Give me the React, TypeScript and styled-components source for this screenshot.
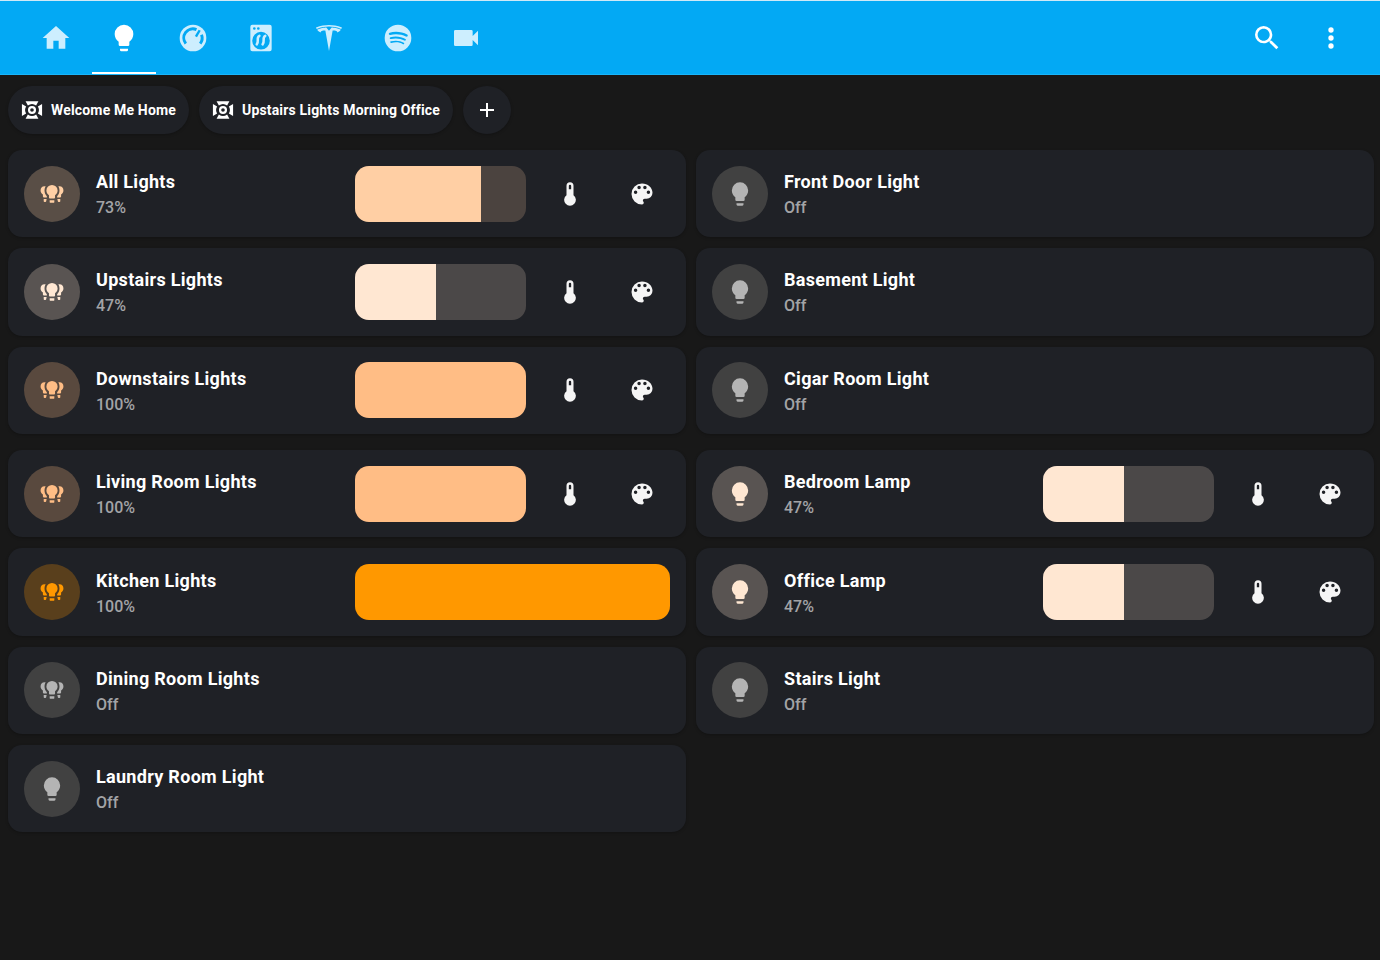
import React from "react";
import styled, { createGlobalStyle } from "styled-components";
import { SiTesla } from "react-icons/si";

const Global = createGlobalStyle`
  html, body { margin: 0; padding: 0; background: #181818; }
  body { font-family: Roboto, "Liberation Sans", sans-serif; width: 1380px; height: 960px; overflow: hidden; }
`;

const P = {
  home: "M10,20V14H14V20H19V12H22L12,3L2,12H5V20H10Z",
  bulb: "M12,2A7,7 0 0,0 5,9C5,11.38 6.19,13.47 8,14.74V17A1,1 0 0,0 9,18H15A1,1 0 0,0 16,17V14.74C17.81,13.47 19,11.38 19,9A7,7 0 0,0 12,2M9,21A1,1 0 0,0 10,22H14A1,1 0 0,0 15,21V20H9V21Z",
  spotify: "M17.9,10.9C14.7,9 9.35,8.8 6.3,9.75C5.8,9.9 5.3,9.6 5.15,9.15C5,8.65 5.3,8.15 5.75,8C9.3,6.95 15.15,7.15 18.85,9.35C19.3,9.6 19.45,10.2 19.2,10.65C18.95,11 18.35,11.15 17.9,10.9M17.8,13.7C17.55,14.05 17.1,14.2 16.75,13.95C14.05,12.3 9.95,11.8 6.8,12.8C6.4,12.9 5.95,12.7 5.85,12.3C5.75,11.9 5.95,11.45 6.35,11.35C10,10.25 14.5,10.8 17.6,12.7C17.9,12.85 18.05,13.35 17.8,13.7M16.6,16.45C16.4,16.75 16.05,16.85 15.75,16.65C13.4,15.2 10.45,14.9 6.95,15.7C6.6,15.8 6.3,15.55 6.2,15.25C6.1,14.9 6.35,14.6 6.65,14.5C10.45,13.65 13.75,14 16.35,15.6C16.7,15.75 16.75,16.15 16.6,16.45M12,2A10,10 0 0,0 2,12A10,10 0 0,0 12,22A10,10 0 0,0 22,12A10,10 0 0,0 12,2Z",
  video: "M17,10.5V7A1,1 0 0,0 16,6H4A1,1 0 0,0 3,7V17A1,1 0 0,0 4,18H16A1,1 0 0,0 17,17V13.5L21,17.5V6.5L17,10.5Z",
  search: "M9.5,3A6.5,6.5 0 0,1 16,9.5C16,11.11 15.41,12.59 14.44,13.73L14.71,14H15.5L20.5,19L19,20.5L14,15.5V14.71L13.73,14.44C12.59,15.41 11.11,16 9.5,16A6.5,6.5 0 0,1 3,9.5A6.5,6.5 0 0,1 9.5,3M9.5,5C7,5 5,7 5,9.5C5,12 7,14 9.5,14C12,14 14,12 14,9.5C14,7 12,5 9.5,5Z",
  dots: "M12,16A2,2 0 0,1 14,18A2,2 0 0,1 12,20A2,2 0 0,1 10,18A2,2 0 0,1 12,16M12,10A2,2 0 0,1 14,12A2,2 0 0,1 12,14A2,2 0 0,1 10,12A2,2 0 0,1 12,10M12,4A2,2 0 0,1 14,6A2,2 0 0,1 12,8A2,2 0 0,1 10,6A2,2 0 0,1 12,4Z",
  plus: "M19,13H13V19H11V13H5V11H11V5H13V11H19V13Z",
  palette: "M17.5,12A1.5,1.5 0 0,1 16,10.5A1.5,1.5 0 0,1 17.5,9A1.5,1.5 0 0,1 19,10.5A1.5,1.5 0 0,1 17.5,12M14.5,8A1.5,1.5 0 0,1 13,6.5A1.5,1.5 0 0,1 14.5,5A1.5,1.5 0 0,1 16,6.5A1.5,1.5 0 0,1 14.5,8M9.5,8A1.5,1.5 0 0,1 8,6.5A1.5,1.5 0 0,1 9.5,5A1.5,1.5 0 0,1 11,6.5A1.5,1.5 0 0,1 9.5,8M6.5,12A1.5,1.5 0 0,1 5,10.5A1.5,1.5 0 0,1 6.5,9A1.5,1.5 0 0,1 8,10.5A1.5,1.5 0 0,1 6.5,12M12,3A9,9 0 0,0 3,12A9,9 0 0,0 12,21A1.5,1.5 0 0,0 13.5,19.5C13.5,19.11 13.35,18.76 13.11,18.5C12.88,18.23 12.73,17.88 12.73,17.5A1.5,1.5 0 0,1 14.23,16H16A5,5 0 0,0 21,11C21,6.58 16.97,3 12,3Z",
  thermo: "M15 13V5A3 3 0 0 0 9 5V13A5 5 0 1 0 15 13M12 4A1 1 0 0 1 13 5V8H11V5A1 1 0 0 1 12 4Z",
  group: "M12,4.2A4.8,4.8 0 0,0 7.2,9C7.2,10.7 8.1,12.2 9.4,13V15A.8.8 0 0,0 10.2,15.8H13.8A.8.8 0 0,0 14.6,15V13C15.9,12.2 16.8,10.7 16.8,9A4.8,4.8 0 0,0 12,4.2M10,17.3H14V18.8A.8.8 0 0,1 13.2,19.6H10.8A.8.8 0 0,1 10,18.8V17.3ZM5.6,5.4A3.6,3.6 0 0,0 2.2,9C2.2,10.5 3,11.7 4.2,12.4V14.2A.7.7 0 0,0 4.9,14.9H7.6V13.9C6.4,12.7 5.6,11 5.6,9C5.6,7.6 5.9,6.4 6.6,5.5C6.3,5.4 5.9,5.4 5.6,5.4M18.4,5.4C18.1,5.4 17.7,5.4 17.4,5.5C18.1,6.4 18.4,7.6 18.4,9C18.4,11 17.6,12.7 16.4,13.9V14.9H19.1A.7.7 0 0,0 19.8,14.2V12.4C21,11.7 21.8,10.5 21.8,9A3.6,3.6 0 0,0 18.4,5.4M4.9,16.2H7.4L7,18.3A.7.7 0 0,1 6.3,18.9H5.6A.7.7 0 0,1 4.9,18.2V16.2M16.6,16.2H19.1V18.2A.7.7 0 0,1 18.4,18.9H17.7A.7.7 0 0,1 17,18.3L16.6,16.2Z",
  scene: "M5,2.5H19L16.5,7.2A7.2,7.2 0 0,0 7.5,7.2L5,2.5ZM5,21.5H19L16.5,16.8A7.2,7.2 0 0,1 7.5,16.8L5,21.5ZM1,5.5L5.6,8.2A7.2,7.2 0 0,0 5.6,15.8L1,18.5V5.5ZM23,5.5L18.4,8.2A7.2,7.2 0 0,1 18.4,15.8L23,18.5V5.5ZM12,7.6A4.4,4.4 0 1,0 12,16.4A4.4,4.4 0 1,0 12,7.6M12,10A2,2 0 1,1 12,14A2,2 0 1,1 12,10Z",
};

const Svg = styled.svg<{ $size: number; $color: string }>`
  width: ${(p) => p.$size}px;
  height: ${(p) => p.$size}px;
  fill: ${(p) => p.$color};
  flex: none;
  display: block;
`;

const Icon = ({ d, size, color }: { d: string; size: number; color: string }) => (
  <Svg viewBox="0 0 24 24" $size={size} $color={color}><path d={d} fillRule="evenodd" /></Svg>
);

const Gauge = () => (
  <Svg viewBox="0 0 24 24" $size={32} $color="#cdeefe">
    <circle cx="12" cy="12" r="10" />
    <path d="M6.6,16.2A6.8,6.8 0 0,1 14.6,5.7" fill="none" stroke="#03a9f4" strokeWidth="2.2" />
    <path d="M18.4,9.6A6.8,6.8 0 0,1 17.4,16.2" fill="none" stroke="#03a9f4" strokeWidth="2.2" />
    <path d="M17,6.2L14.2,11" fill="none" stroke="#03a9f4" strokeWidth="1.8" />
  </Svg>
);

const Washer = () => (
  <Svg viewBox="0 0 24 24" $size={32} $color="#cdeefe">
    <path fillRule="evenodd" d="M5.5,2H18.5A1.5,1.5 0 0,1 20,3.5V20.5A1.5,1.5 0 0,1 18.5,22H5.5A1.5,1.5 0 0,1 4,20.5V3.5A1.5,1.5 0 0,1 5.5,2M7,3.9A1,1 0 1,0 7,5.9A1,1 0 1,0 7,3.9M10,3.9A1,1 0 1,0 10,5.9A1,1 0 1,0 10,3.9M12,7.4A6.6,6.6 0 1,0 12,20.6A6.6,6.6 0 1,0 12,7.4Z" />
    <path d="M10.8,10.4C8.2,11.6 10.8,14.4 8.8,16.8M15.2,10.4C12.6,11.6 15.2,14.4 13.2,16.8" fill="none" stroke="#cdeefe" strokeWidth="1.9" strokeLinecap="round" />
  </Svg>
);

const Header = styled.header`
  height: 75px;
  box-sizing: border-box;
  background: #03a9f4;
  border-top: 1px solid #cfe9f7;
  border-bottom: 1px solid #19b5fa;
  display: flex;
  align-items: stretch;
  padding: 0 17px 0 22px;
`;
const Tab = styled.div`
  width: 68.3px;
  box-sizing: border-box;
  padding: 0 2px;
  display: flex;
  justify-content: center;
  align-items: center;
  color: #cdeefe;
`;
const TabInner = styled.div<{ $active?: boolean }>`
  width: 64px;
  height: 100%;
  box-sizing: border-box;
  padding-top: 2px;
  display: flex;
  justify-content: center;
  align-items: center;
  border-bottom: 2px solid ${(p) => (p.$active ? "#ffffff" : "transparent")};
`;
const Spacer = styled.div`
  flex: 1;
`;
const ActionBtn = styled.div`
  width: 64px;
  display: flex;
  justify-content: center;
  align-items: center;
`;
const ChipRow = styled.div`
  display: flex;
  gap: 10.5px;
  padding: 11px 0 0 8px;
`;
const Chip = styled.div`
  height: 48px;
  box-sizing: border-box;
  border-radius: 24px;
  background: #1f2126;
  color: #fff;
  display: flex;
  align-items: center;
  gap: 8px;
  padding: 0 12.5px 1px 13px;
  font-size: 14px;
  font-weight: 700;
  letter-spacing: 0.17px;
  box-shadow: 0 1px 3px rgba(0, 0, 0, 0.25);
`;
const AddChip = styled(Chip)`
  width: 48px;
  padding: 0;
  justify-content: center;
`;
const Grid = styled.main`
  display: grid;
  grid-template-columns: 678px 678px;
  column-gap: 10px;
  padding: 16px 6px 0 8px;
`;
const Column = styled.div`
  display: flex;
  flex-direction: column;
  gap: 16.4px;
`;
const Group = styled.div`
  display: flex;
  flex-direction: column;
  gap: 11px;
`;
const Card = styled.div`
  height: 87.25px;
  box-sizing: border-box;
  background: #1f2126;
  border-radius: 14px;
  padding: 16px;
  display: flex;
  align-items: center;
  gap: 16px;
  box-shadow: 0 1px 3px rgba(0, 0, 0, 0.25);
`;
const Badge = styled.div<{ $bg: string }>`
  width: 56px;
  height: 56px;
  border-radius: 50%;
  background: ${(p) => p.$bg};
  flex: none;
  display: flex;
  align-items: center;
  justify-content: center;
`;
const Info = styled.div`
  flex: 1;
  min-width: 0;
  display: flex;
  flex-direction: column;
  gap: 4px;
  margin-top: 1px;
`;
const Title = styled.div`
  color: #fff;
  font-size: 18px;
  font-weight: 700;
  letter-spacing: 0.3px;
  line-height: 24px;
  white-space: nowrap;
`;
const Sub = styled.div`
  color: #a3a4a6;
  font-size: 16px;
  font-weight: 500;
  line-height: 20px;
`;
const Controls = styled.div`
  width: 315px;
  flex: none;
  display: flex;
  align-items: center;
  gap: 16px;
`;
const Slider = styled.div<{ $track: string }>`
  flex: 1;
  height: 56px;
  border-radius: 14px;
  overflow: hidden;
  background: ${(p) => p.$track};
`;
const Fill = styled.div<{ $color: string }>`
  height: 100%;
  background: ${(p) => p.$color};
`;
const ToolBtn = styled.div`
  width: 56px;
  height: 56px;
  flex: none;
  display: flex;
  align-items: center;
  justify-content: center;
`;

type L = { name: string; sub: string; group?: boolean; color?: string; pct?: number; tools?: boolean };

const alpha = (hex: string, a: number) => {
  const n = parseInt(hex.slice(1), 16);
  return `rgba(${n >> 16},${(n >> 8) & 255},${n & 255},${a})`;
};

const Row = ({ l }: { l: L }) => {
  const on = !!l.color;
  return (
    <Card>
      <Badge $bg={on ? alpha(l.color!, 0.26) : "#414141"}>
        <Icon d={l.group ? P.group : P.bulb} size={28} color={on ? l.color! : "#b4b4b4"} />
      </Badge>
      <Info>
        <Title>{l.name}</Title>
        <Sub>{l.sub}</Sub>
      </Info>
      {on && (
        <Controls>
          <Slider $track={alpha(l.color!, 0.2)}>
            <Fill $color={l.color!} style={{ width: `${l.pct}%` }} />
          </Slider>
          {l.tools !== false && (
            <>
              <ToolBtn><Icon d={P.thermo} size={28} color="#f5f5f5" /></ToolBtn>
              <ToolBtn><Icon d={P.palette} size={28} color="#f5f5f5" /></ToolBtn>
            </>
          )}
        </Controls>
      )}
    </Card>
  );
};

const left: L[][] = [
  [
    { name: "All Lights", sub: "73%", group: true, color: "#ffcfa4", pct: 73.6 },
    { name: "Upstairs Lights", sub: "47%", group: true, color: "#ffe7d2", pct: 47.4 },
    { name: "Downstairs Lights", sub: "100%", group: true, color: "#ffbd85", pct: 100 },
  ],
  [
    { name: "Living Room Lights", sub: "100%", group: true, color: "#ffbd85", pct: 100 },
    { name: "Kitchen Lights", sub: "100%", group: true, color: "#ff9800", pct: 100, tools: false },
    { name: "Dining Room Lights", sub: "Off", group: true },
    { name: "Laundry Room Light", sub: "Off" },
  ],
];
const right: L[][] = [
  [
    { name: "Front Door Light", sub: "Off" },
    { name: "Basement Light", sub: "Off" },
    { name: "Cigar Room Light", sub: "Off" },
  ],
  [
    { name: "Bedroom Lamp", sub: "47%", color: "#ffe7d2", pct: 47.4 },
    { name: "Office Lamp", sub: "47%", color: "#ffe7d2", pct: 47.4 },
    { name: "Stairs Light", sub: "Off" },
  ],
];

const Col = ({ groups }: { groups: L[][] }) => (
  <Column>
    {groups.map((g, i) => (
      <Group key={i}>
        {g.map((l) => <Row key={l.name} l={l} />)}
      </Group>
    ))}
  </Column>
);

export default function App() {
  const c = "#cdeefe";
  return (
    <>
      <Global />
      <Header>
        <Tab><TabInner><Icon d={P.home} size={32} color={c} /></TabInner></Tab>
        <Tab><TabInner $active><Icon d={P.bulb} size={32} color="#fff" /></TabInner></Tab>
        <Tab><TabInner><Gauge /></TabInner></Tab>
        <Tab><TabInner><Washer /></TabInner></Tab>
        <Tab><TabInner><SiTesla size={26} color={c} /></TabInner></Tab>
        <Tab><TabInner><Icon d={P.spotify} size={32} color={c} /></TabInner></Tab>
        <Tab><TabInner><Icon d={P.video} size={32} color={c} /></TabInner></Tab>
        <Spacer />
        <ActionBtn><Icon d={P.search} size={32} color="#fff" /></ActionBtn>
        <ActionBtn><Icon d={P.dots} size={32} color="#fff" /></ActionBtn>
      </Header>
      <ChipRow>
        <Chip><Icon d={P.scene} size={22} color="#fff" />Welcome Me Home</Chip>
        <Chip><Icon d={P.scene} size={22} color="#fff" />Upstairs Lights Morning Office</Chip>
        <AddChip><Icon d={P.plus} size={24} color="#fff" /></AddChip>
      </ChipRow>
      <Grid>
        <Col groups={left} />
        <Col groups={right} />
      </Grid>
    </>
  );
}
